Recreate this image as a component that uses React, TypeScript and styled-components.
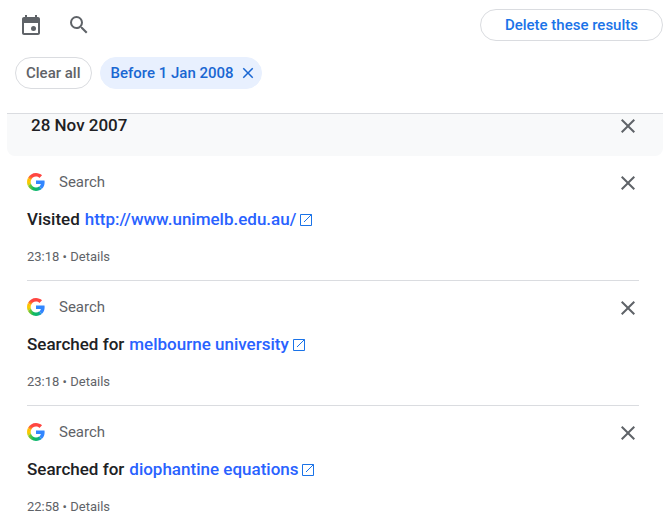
import React from "react";
import styled, { createGlobalStyle } from "styled-components";

const GlobalStyle = createGlobalStyle`
  *, *::before, *::after { box-sizing: border-box; }
  body {
    margin: 0;
    background: #fff;
    color: #202124;
    font-family: Roboto, "Noto Sans", sans-serif;
  }
`;

const Page = styled.main`
  padding: 9px 4px 0 7px;
`;

const Toolbar = styled.div`
  display: flex;
  align-items: center;
  gap: 24px;
  padding-left: 12px;
  height: 32px;
`;

const IconButton = styled.button`
  display: flex;
  flex: none;
  padding: 0;
  border: 0;
  background: none;
  color: #5f6368;
  cursor: pointer;
`;

const PillButton = styled.button`
  display: flex;
  align-items: center;
  justify-content: center;
  height: 32px;
  border: 1px solid #dadce0;
  border-radius: 16px;
  background: #fff;
  font-family: inherit;
  font-size: 15px;
  font-weight: 500;
  cursor: pointer;
`;

const DeleteButton = styled(PillButton)`
  margin-left: auto;
  padding: 0 24px;
  color: #1a73e8;
`;

const ChipRow = styled.div`
  display: flex;
  gap: 8px;
  padding: 16px 8px 24px;
`;

const Chip = styled(PillButton)<{ $active?: boolean }>`
  gap: 5px;
  padding: 0 ${(p) => (p.$active ? 4 : 10)}px 0 10px;
  border-color: ${(p) => (p.$active ? "#e8f0fe" : "#dadce0")};
  background: ${(p) => (p.$active ? "#e8f0fe" : "#fff")};
  color: ${(p) => (p.$active ? "#1967d2" : "#5f6368")};
`;

const DayHeader = styled.header`
  display: flex;
  justify-content: space-between;
  align-items: flex-start;
  height: 43px;
  padding: 0 23px 0 24px;
  border-top: 1px solid #dadce0;
  border-radius: 0 0 8px 8px;
  background: #f8f9fa;
`;

const DayTitle = styled.h2`
  margin: 0;
  font-size: 17px;
  line-height: 22px;
  font-weight: 500;
`;

const Entries = styled.ul`
  margin: 0;
  padding: 0 23px 0 20px;
  list-style: none;
`;

const Entry = styled.li`
  padding: 12px 0 15px;
  & + & {
    position: relative;
    padding-top: 13px;
  }
  & + &::before {
    content: "";
    position: absolute;
    top: 0;
    left: 0;
    right: 1px;
    border-top: 1px solid #dadce0;
  }
`;

const EntryHead = styled.div`
  display: flex;
  align-items: center;
  gap: 14px;
`;

const ItemDelete = styled(IconButton)`
  padding-top: 3px;
`;

const Product = styled.span`
  flex: 1;
  color: #5f6368;
  font-size: 15px;
  line-height: 24px;
`;

const Title = styled.h3`
  display: flex;
  align-items: center;
  gap: 5px;
  margin: 12px 0 18px;
  font-size: 17px;
  line-height: 24px;
  font-weight: 500;
`;

const ResultLink = styled.a`
  display: inline-flex;
  align-items: center;
  gap: 4px;
  color: #2962ff;
  text-decoration: none;
`;

const Meta = styled.div`
  color: #5f6368;
  font-size: 13px;
  line-height: 16px;
`;

const DetailsLink = styled.a`
  color: inherit;
  text-decoration: none;
`;

const CalendarIcon = () => (
  <svg width="24" height="24" viewBox="0 0 24 24" fill="currentColor" aria-hidden="true">
    <path d="M19 4h-1V2h-2v2H8V2H6v2H5c-1.11 0-1.99.9-1.99 2L3 20c0 1.1.89 2 2 2h14c1.1 0 2-.9 2-2V6c0-1.1-.9-2-2-2zm0 16H5V10h14v10z" />
    <circle cx="14.5" cy="15.5" r="2.5" />
  </svg>
);

const SearchIcon = () => (
  <svg width="24" height="24" viewBox="0 0 24 24" fill="currentColor" aria-hidden="true">
    <path d="M15.5 14h-.79l-.28-.27A6.471 6.471 0 0 0 16 9.500 6.500 6.500 0 1 0 9.500 16c1.610 0 3.090-.59 4.230-1.570l.27.28v.79l5 4.990L20.490 19l-4.990-5zm-6 0C7.010 14 5 11.990 5 9.500S7.010 5 9.500 5 14 7.010 14 9.500 11.990 14 9.500 14z" />
  </svg>
);

const CloseIcon = ({ size }: { size: number }) => (
  <svg width={size} height={size} viewBox="0 0 24 24" fill="currentColor" aria-hidden="true">
    <path d="M19 6.410L17.590 5 12 10.590 6.410 5 5 6.410 10.590 12 5 17.590 6.410 19 12 13.410 17.590 19 19 17.590 13.410 12z" />
  </svg>
);

const OpenIcon = () => (
  <svg width="12" height="14" viewBox="0 -2 12 14" fill="none" stroke="#1a73e8" aria-hidden="true">
    <path d="M6 .5H.5v11h11V6M6 .5h5.500V6" />
    <path d="M11.500.5L4 8" />
  </svg>
);

const GoogleLogo = () => (
  <svg width="18" height="18" viewBox="0 0 48 48" aria-hidden="true">
    <defs>
      <linearGradient id="g-top" x1="0" y1="1" x2="1" y2="0">
        <stop offset="0.1" stopColor="#ffb000" />
        <stop offset="0.4" stopColor="#ff4641" />
      </linearGradient>
      <linearGradient id="g-side" x1="0" y1="0" x2="0" y2="1">
        <stop offset="0" stopColor="#ffb000" />
        <stop offset="0.5" stopColor="#ffcc00" />
        <stop offset="1" stopColor="#b5cc1c" />
      </linearGradient>
      <linearGradient id="g-bottom" x1="0" y1="0" x2="1" y2="0">
        <stop offset="0" stopColor="#a2cb20" />
        <stop offset="0.4" stopColor="#0ebc5f" />
        <stop offset="0.75" stopColor="#0eb27a" />
        <stop offset="1" stopColor="#3186ff" />
      </linearGradient>
    </defs>
    <path fill="url(#g-top)" d="M24 9.500c3.540 0 6.710 1.220 9.210 3.600l6.850-6.850C35.900 2.380 30.470 0 24 0 14.620 0 6.510 5.380 2.560 13.220l7.980 6.190C12.430 13.720 17.740 9.500 24 9.500z" />
    <path fill="#3186ff" d="M46.980 24.550c0-1.570-.15-3.090-.38-4.550H24v9.020h12.940c-.58 2.960-2.260 5.480-4.780 7.180l7.730 6c4.510-4.180 7.090-10.360 7.090-17.650z" />
    <path fill="url(#g-side)" d="M10.530 28.590c-.48-1.450-.76-2.990-.76-4.590s.27-3.140.76-4.590l-7.980-6.190C.92 16.460 0 20.120 0 24c0 3.880.92 7.540 2.560 10.780l7.970-6.190z" />
    <path fill="url(#g-bottom)" d="M24 48c6.480 0 11.930-2.130 15.890-5.810l-7.730-6c-2.150 1.450-4.920 2.300-8.160 2.300-6.260 0-11.570-4.220-13.470-9.910l-7.980 6.190C6.510 42.620 14.620 48 24 48z" />
  </svg>
);

const entries = [
  { verb: "Visited", text: "http://www.unimelb.edu.au/", time: "23:18" },
  { verb: "Searched for", text: "melbourne university", time: "23:18" },
  { verb: "Searched for", text: "diophantine equations", time: "22:58" },
];

export default function App() {
  return (
    <Page>
      <GlobalStyle />
      <Toolbar>
        <IconButton aria-label="Filter by date"><CalendarIcon /></IconButton>
        <IconButton aria-label="Search activity"><SearchIcon /></IconButton>
        <DeleteButton>Delete these results</DeleteButton>
      </Toolbar>
      <ChipRow>
        <Chip>Clear all</Chip>
        <Chip $active>Before 1 Jan 2008<CloseIcon size={18} /></Chip>
      </ChipRow>
      <section>
        <DayHeader>
          <DayTitle>28 Nov 2007</DayTitle>
          <IconButton aria-label="Delete day"><CloseIcon size={24} /></IconButton>
        </DayHeader>
        <Entries>
          {entries.map((e) => (
            <Entry key={e.text}>
              <EntryHead>
                <GoogleLogo />
                <Product>Search</Product>
                <ItemDelete aria-label="Delete item"><CloseIcon size={24} /></ItemDelete>
              </EntryHead>
              <Title>
                {e.verb}
                <ResultLink href="#">{e.text}<OpenIcon /></ResultLink>
              </Title>
              <Meta>{e.time} • <DetailsLink href="#">Details</DetailsLink></Meta>
            </Entry>
          ))}
        </Entries>
      </section>
    </Page>
  );
}
